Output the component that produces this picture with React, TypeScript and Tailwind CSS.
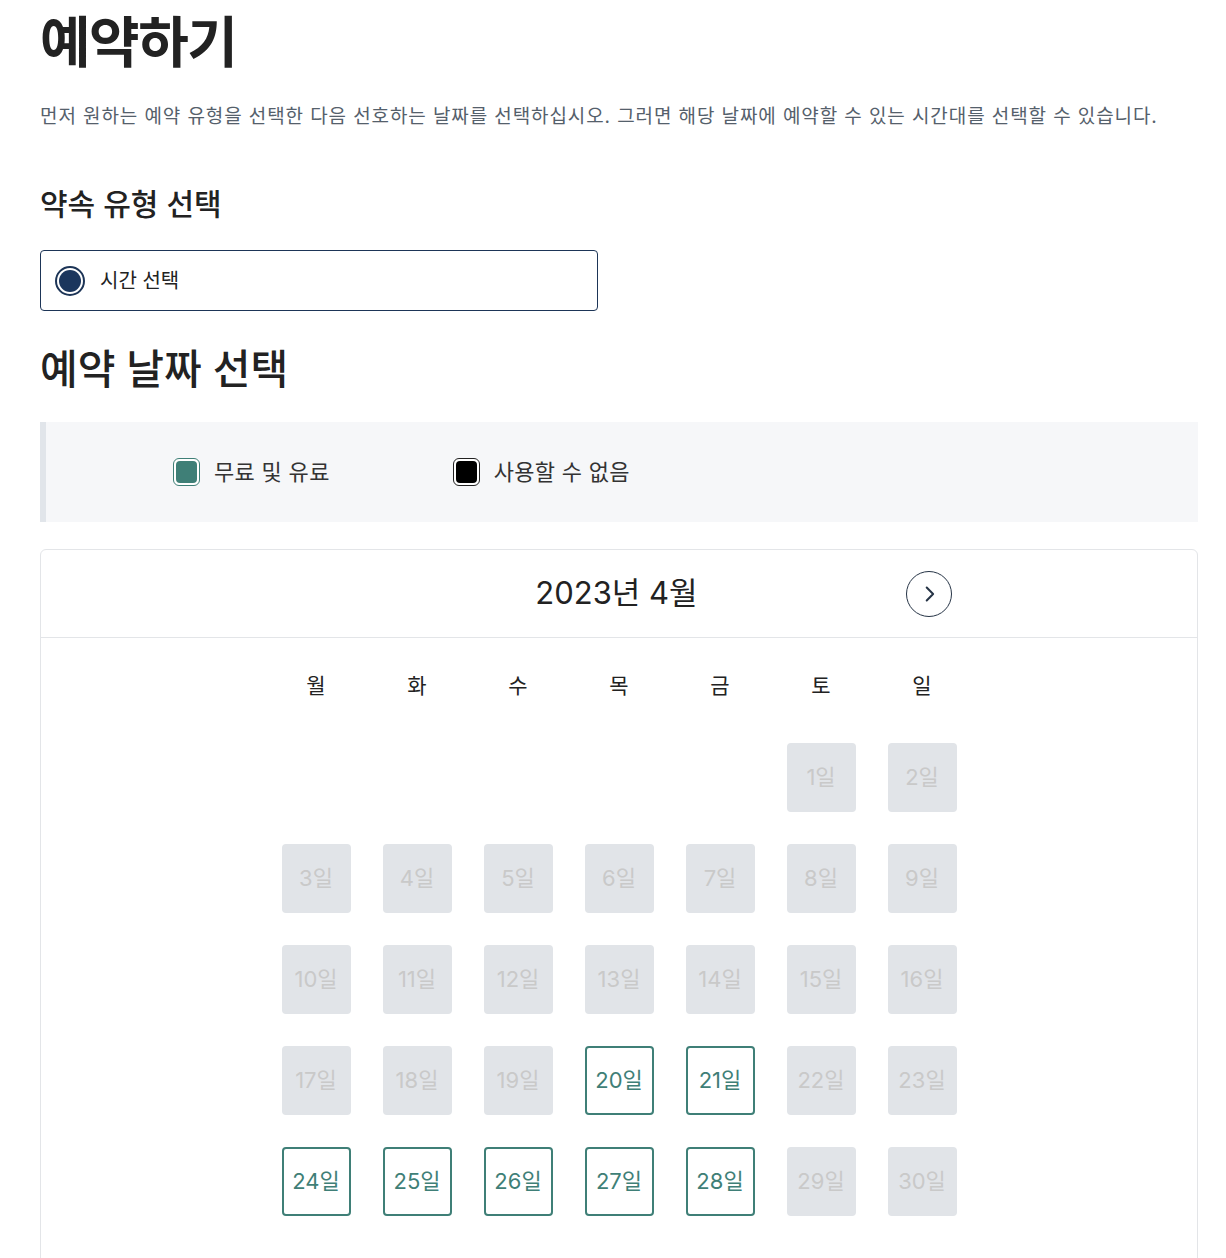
import React from "react";

const FONT = { fontFamily: '"Inter", "Noto Sans CJK KR", sans-serif' };

type Day = { d: number; available: boolean } | null;

const availableDays = new Set([20, 21, 24, 25, 26, 27, 28]);

function buildDays(): Day[] {
  const cells: Day[] = [null, null, null, null, null];
  for (let i = 1; i <= 30; i++) cells.push({ d: i, available: availableDays.has(i) });
  return cells;
}

export default function App() {
  const days = buildDays();
  const weekdays = ["월", "화", "수", "목", "금", "토", "일"];
  return (
    <div className="bg-white min-h-screen pl-10 pr-[28px] text-[#222]" style={FONT}>
      <h1 className="text-[55px] leading-[64px] font-semibold tracking-[-1.5px] text-[#222] pt-[10px]">예약하기</h1>
      <p className="mt-[29px] text-[19px] leading-[28px] tracking-[0.9px] text-[#55606b]">
        먼저 원하는 예약 유형을 선택한 다음 선호하는 날짜를 선택하십시오. 그러면 해당 날짜에 예약할 수 있는 시간대를 선택할 수 있습니다.
      </p>
      <h2 className="mt-[52px] text-[30px] leading-[42px] font-medium text-[#222]">약속 유형 선택</h2>
      <div className="mt-[25px] w-[558px] h-[61px] border border-[#1d3557] rounded-[4px] flex items-center px-[14px] gap-[15px]">
        <span className="w-[30px] h-[30px] rounded-full border-2 border-[#1d3557] bg-white flex items-center justify-center">
          <span className="w-[22px] h-[22px] rounded-full bg-[#1b365d]" />
        </span>
        <span className="text-[20px] text-[#222]">시간 선택</span>
      </div>
      <h2 className="mt-[30px] text-[41px] leading-[56px] font-medium text-[#222]">예약 날짜 선택</h2>
      <div className="mt-[25px] h-[100px] bg-[#f6f7f9] border-l-[6px] border-[#e1e5ea] flex items-center pl-[127px] gap-[123px]">
        <div className="flex items-center gap-[14px]">
          <span className="w-[27px] h-[28px] rounded-[6px] border border-[#3f7f77] p-[2px] bg-white">
            <span className="block w-full h-full rounded-[4px] bg-[#3f7f77]" />
          </span>
          <span className="text-[22px] tracking-[0.3px] text-[#333]">무료 및 유료</span>
        </div>
        <div className="flex items-center gap-[14px]">
          <span className="w-[27px] h-[28px] rounded-[6px] border border-[#222] p-[2px] bg-white">
            <span className="block w-full h-full rounded-[4px] bg-black" />
          </span>
          <span className="text-[22px] tracking-[0.3px] text-[#333]">사용할 수 없음</span>
        </div>
      </div>
      <div className="mt-[27px] border border-[#e3e5e8] rounded-t-[6px] pb-[64px]">
        <div className="h-[88px] border-b border-[#e3e5e8] flex items-center justify-center">
          <div className="w-[675px] flex items-center">
            <div className="flex-1" />
            <div className="text-[31px] font-normal text-[#222]">2023년 4월</div>
            <div className="flex-1 flex justify-end pr-[5px]">
              <button className="w-[46px] h-[46px] rounded-full border-[1.5px] border-[#263446] flex items-center justify-center">
                <svg width="22" height="22" viewBox="0 0 24 24" fill="none" stroke="#263446" strokeWidth="2.2" strokeLinecap="round" strokeLinejoin="round">
                  <path d="M9.5 5l7 7-7 7" />
                </svg>
              </button>
            </div>
          </div>
        </div>
        <div className="w-[675px] mx-auto">
          <div className="grid grid-cols-7 gap-x-[32px] pt-[33px]">
            {weekdays.map((w) => (
              <div key={w} className="text-center text-[21px] leading-[30px] text-[#222]">{w}</div>
            ))}
          </div>
          <div className="grid grid-cols-7 gap-x-[32px] gap-y-[32px] mt-[42px]">
            {days.map((c, i) =>
              c === null ? (
                <div key={i} className="h-[69px]" />
              ) : c.available ? (
                <div key={i} className="h-[69px] rounded-[4px] border-2 border-[#3f7f77] bg-white flex items-center justify-center text-[22px] text-[#3f7f77]">
                  {c.d}일
                </div>
              ) : (
                <div key={i} className="h-[69px] rounded-[4px] bg-[#e1e4e8] flex items-center justify-center text-[22px] text-[#c9c9c9]">
                  {c.d}일
                </div>
              )
            )}
          </div>
        </div>
      </div>
    </div>
  );
}
